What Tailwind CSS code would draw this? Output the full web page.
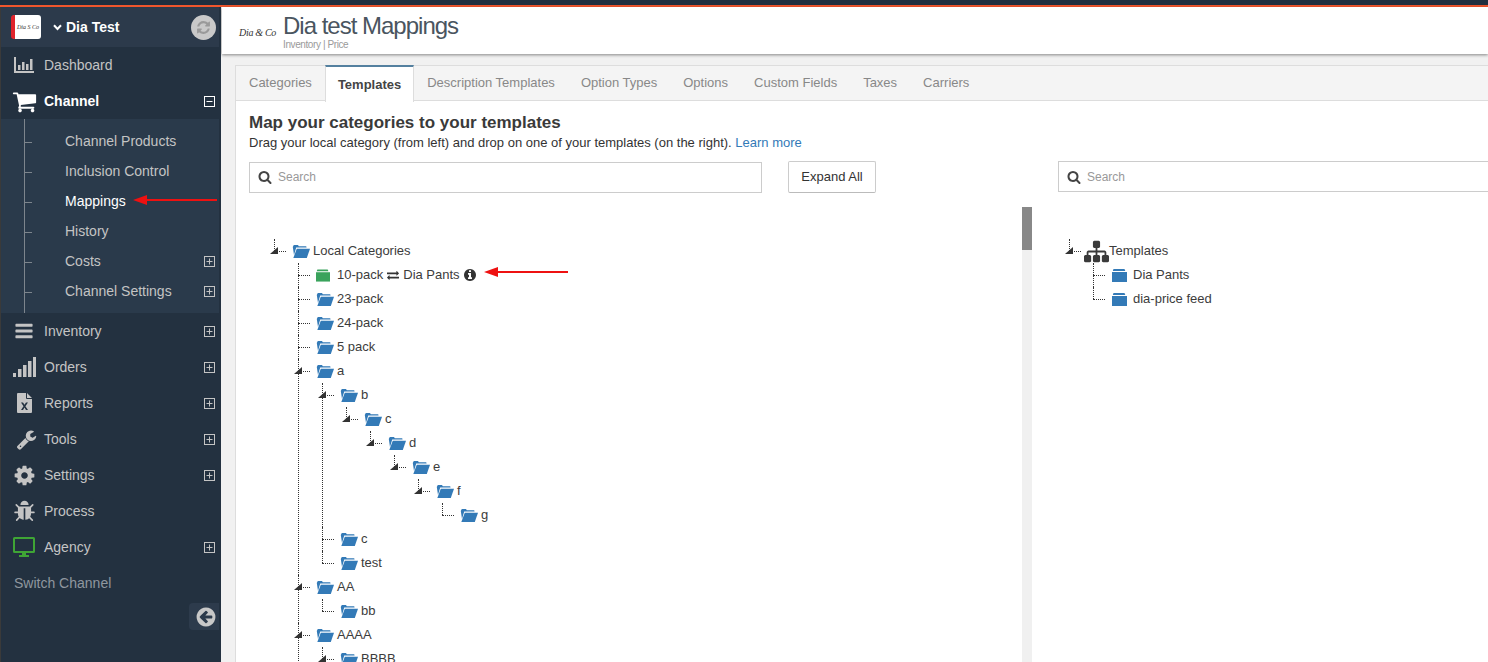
<!doctype html>
<html lang="en">
<head>
<meta charset="utf-8">
<title>Dia test Mappings</title>
<script src="https://cdn.jsdelivr.net/npm/@tailwindcss/browser@4"></script>
</head>
<body class="bg-[#f1f1f1] font-['Liberation_Sans',Arial,sans-serif] text-[14px] text-[#333]">

<!-- icon set -->
<svg class="hidden">
  <symbol id="i-cart" viewBox="0 0 1792 1792"><path d="M704 1536q0 52-38 90t-90 38-90-38-38-90 38-90 90-38 90 38 38 90zm896 0q0 52-38 90t-90 38-90-38-38-90 38-90 90-38 90 38 38 90zm128-1088v512q0 24-16.5 42.5t-40.5 21.5l-1044 122q13 60 13 70 0 16-24 64h920q26 0 45 19t19 45-19 45-45 19h-1024q-26 0-45-19t-19-45q0-11 8-31.5t16-36 21.5-40 15.5-29.5l-177-823h-204q-26 0-45-19t-19-45 19-45 45-19h256q16 0 28.5 6.5t19.5 15.5 13 24.5 8 26 5.5 29.5 4.5 26h1201q26 0 45 19t19 45z"/></symbol>
  <symbol id="i-bars" viewBox="0 0 1792 1792"><path d="M1664 1344v128q0 26-19 45t-45 19h-1408q-26 0-45-19t-19-45v-128q0-26 19-45t45-19h1408q26 0 45 19t19 45zm0-512v128q0 26-19 45t-45 19h-1408q-26 0-45-19t-19-45v-128q0-26 19-45t45-19h1408q26 0 45 19t19 45zm0-512v128q0 26-19 45t-45 19h-1408q-26 0-45-19t-19-45v-128q0-26 19-45t45-19h1408q26 0 45 19t19 45z"/></symbol>
  <symbol id="i-wrench" viewBox="0 0 1792 1792"><path d="M448 1472q0-26-19-45t-45-19-45 19-19 45 19 45 45 19 45-19 19-45zm644-420l-682 682q-37 37-90 37-52 0-91-37l-106-108q-38-36-38-90 0-53 38-91l681-681q39 98 114.5 173.5t173.5 114.5zm634-435q0 39-23 106-47 134-164.5 217.5t-258.5 83.5q-185 0-316.5-131.5t-131.5-316.5 131.5-316.5 316.5-131.5q58 0 121.5 16.5t107.5 46.5q16 11 16 28t-16 28l-293 169v224l193 107q5-3 79-48.5t135.5-81 70.5-35.5q15 0 23.5 10t8.5 25z"/></symbol>
  <symbol id="i-cog" viewBox="0 0 1792 1792"><path d="M1152 896q0-106-75-181t-181-75-181 75-75 181 75 181 181 75 181-75 75-181zm512-109v222q0 12-8 23t-20 13l-185 28q-19 54-39 91 35 50 107 138 10 12 10 25t-9 23q-27 37-99 108t-94 71q-12 0-26-9l-138-108q-44 23-91 38-16 136-29 186-7 28-36 28h-222q-14 0-24.5-8.5t-11.5-21.5l-28-184q-49-16-90-37l-141 107q-10 9-25 9-14 0-25-11-126-114-165-168-7-10-7-23 0-12 8-23 15-21 51-66.5t54-70.5q-27-50-41-99l-183-27q-13-2-21-12.5t-8-23.5v-222q0-12 8-23t19-13l186-28q14-46 39-92-40-57-107-138-10-12-10-24 0-10 9-23 26-36 98.5-107.5t94.5-71.5q13 0 26 10l138 107q44-23 91-38 16-136 29-186 7-28 36-28h222q14 0 24.5 8.5t11.5 21.5l28 184q49 16 90 37l142-107q9-9 24-9 13 0 25 10 129 119 165 170 7 8 7 22 0 12-8 23-15 21-51 66.5t-54 70.5q26 50 41 98l183 28q13 2 21 12.5t8 23.5z"/></symbol>
  <symbol id="i-bug" viewBox="0 0 1792 1792"><path d="M1696 960q0 26-19 45t-45 19h-224q0 171-67 290l208 209q19 19 19 45t-19 45q-18 19-45 19t-45-19l-198-197q-5 5-15 13t-42 28.5-65 36.5-82 29-97 13v-896h-128v896q-51 0-101.5-13.5t-87-33-66-39-43.5-32.5l-15-14-183 207q-20 21-48 21-24 0-43-16-19-18-20.5-44.5t15.5-46.5l202-227q-58-114-58-274h-224q-26 0-45-19t-19-45 19-45 45-19h224v-294l-173-173q-19-19-19-45t19-45 45-19 45 19l173 173h844l173-173q19-19 45-19t45 19 19 45-19 45l-173 173v294h224q26 0 45 19t19 45zm-480-576h-640q0-133 93.5-226.5t226.5-93.5 226.5 93.5 93.5 226.5z"/></symbol>
  <symbol id="i-search" viewBox="0 0 1792 1792"><path d="M1216 832q0-185-131.5-316.5t-316.5-131.5-316.5 131.5-131.5 316.5 131.5 316.5 316.5 131.5 316.5-131.5 131.5-316.5zm512 832q0 52-38 90t-90 38q-54 0-90-38l-343-342q-179 124-399 124-143 0-273.5-55.5t-225-150-150-225-55.5-273.5 55.5-273.5 150-225 225-150 273.5-55.5 273.5 55.5 225 150 150 225 55.5 273.5q0 220-124 399l343 343q37 37 37 90z"/></symbol>
  <symbol id="i-info" viewBox="0 0 1792 1792"><path d="M1152 1376v-160q0-14-9-23t-23-9h-96v-512q0-14-9-23t-23-9h-320q-14 0-23 9t-9 23v160q0 14 9 23t23 9h96v320h-96q-14 0-23 9t-9 23v160q0 14 9 23t23 9h448q14 0 23-9t9-23zm-128-896v-160q0-14-9-23t-23-9h-192q-14 0-23 9t-9 23v160q0 14 9 23t23 9h192q14 0 23-9t9-23zm640 416q0 209-103 385.5t-279.5 279.5-385.5 103-385.5-103-279.5-279.5-103-385.5 103-385.5 279.5-279.5 385.5-103 385.5 103 279.5 279.5 103 385.5z"/></symbol>
  <symbol id="i-back" viewBox="0 0 1792 1792"><path d="M1408 960v-128q0-26-19-45t-45-19h-502l189-189q19-19 19-45t-19-45l-91-91q-18-18-45-18t-45 18l-362 362-91 91q-18 18-18 45t18 45l91 91 362 362q18 18 45 18t45-18l91-91q18-18 18-45t-18-45l-189-189h502q26 0 45-19t19-45zm256-64q0 209-103 385.5t-279.5 279.5-385.5 103-385.5-103-279.5-279.5-103-385.5 103-385.5 279.5-279.5 385.5-103 385.5 103 279.5 279.5 103 385.5z"/></symbol>
  <symbol id="i-refresh" viewBox="0 0 1792 1792"><path d="M1639 1056q0 5-1 7-64 268-268 434.5t-478 166.5q-146 0-282.5-55t-243.5-157l-129 129q-19 19-45 19t-45-19-19-45v-448q0-26 19-45t45-19h448q26 0 45 19t19 45-19 45l-137 137q71 66 161 102t187 36q134 0 250-65t186-179q11-17 53-117 8-23 30-23h192q13 0 22.5 9.5t9.5 22.5zm25-800v448q0 26-19 45t-45 19h-448q-26 0-45-19t-19-45 19-45l138-138q-148-137-349-137-134 0-250 65t-186 179q-11 17-53 117-8 23-30 23h-199q-13 0-22.5-9.5t-9.5-22.5v-7q65-268 270-434.5t480-166.5q146 0 284 55.5t245 156.5l130-129q19-19 45-19t45 19 19 45z"/></symbol>
  <symbol id="i-exchange" viewBox="0 0 1792 1792"><path d="M1792 1184v192q0 13-9.5 22.5t-22.5 9.5h-1376v192q0 13-9.5 22.5t-22.5 9.5q-12 0-24-10l-319-320q-9-9-9-22 0-14 9-23l320-320q9-9 23-9 13 0 22.5 9.5t9.5 22.5v192h1376q13 0 22.5 9.5t9.5 22.5zm0-544q0 14-9 23l-320 320q-9 9-23 9-13 0-22.5-9.5t-9.5-22.5v-192h-1376q-13 0-22.5-9.5t-9.5-22.5v-192q0-13 9.5-22.5t22.5-9.5h1376v-192q0-14 9-23t23-9q12 0 24 10l319 319q9 9 9 23z"/></symbol>
  <symbol id="i-sitemap" viewBox="0 0 1792 1792"><path d="M1792 1248v320q0 40-28 68t-68 28h-320q-40 0-68-28t-28-68v-320q0-40 28-68t68-28h96v-192h-512v192h96q40 0 68 28t28 68v320q0 40-28 68t-68 28h-320q-40 0-68-28t-28-68v-320q0-40 28-68t68-28h96v-192h-512v192h96q40 0 68 28t28 68v320q0 40-28 68t-68 28h-320q-40 0-68-28t-28-68v-320q0-40 28-68t68-28h96v-192q0-52 38-90t90-38h512v-192h-96q-40 0-68-28t-28-68v-320q0-40 28-68t68-28h320q40 0 68 28t28 68v320q0 40-28 68t-68 28h-96v192h512q52 0 90 38t38 90v192h96q40 0 68 28t28 68z"/></symbol>
  <symbol id="i-chart" viewBox="0 0 20 16"><path d="M0 0h2v14h18v2H0z"/><path d="M4 8h2.5v5H4zM8 5h2.5v8H8zM12 7h2.5v6H12zM16 2h2.5v11H16z"/></symbol>
  <symbol id="i-signal" viewBox="0 0 23 20"><path d="M0 16h3v4H0zM5 12h3.500v8H5zM10 8h3.500v12H10zM15 4h3.500v16H15zM20 0h3v20h-3z"/></symbol>
  <symbol id="i-excel" viewBox="0 0 15 20"><path fill-rule="evenodd" d="M0 1a1 1 0 0 1 1-1h8v5a1 1 0 0 0 1 1h5v13a1 1 0 0 1-1 1H1a1 1 0 0 1-1-1zM10 0l5 5h-5zM4 9.500l2.500 3.700L4 17h2l1.500-2.400L9 17h2l-2.600-3.800L11 9.500H9l-1.500 2.300L6 9.500z"/></symbol>
  <symbol id="i-desktop" viewBox="0 0 22 20"><path fill-rule="evenodd" d="M1.500 0h19A1.500 1.500 0 0 1 22 1.500v13a1.500 1.500 0 0 1-1.500 1.500H13v2h3v2H6v-2h3v-2H1.500A1.500 1.500 0 0 1 0 14.500v-13A1.500 1.500 0 0 1 1.500 0zM2 2v12h18V2z"/></symbol>
  <symbol id="i-plus" viewBox="0 0 11 11"><path fill-rule="evenodd" d="M0 0h11v11H0zM1 1v9h9V1z"/><path d="M5 2.500h1V5h2.500v1H6v2.500H5V6H2.500V5H5z"/></symbol>
  <symbol id="i-minus" viewBox="0 0 11 11"><path fill-rule="evenodd" d="M0 0h11v11H0zM1 1v9h9V1z"/><path d="M2.500 5h6v1h-6z"/></symbol>
  <symbol id="i-open" viewBox="0 0 18 14"><path d="M1 2.500 1.800 1H6l.8 1.200h7.400l.4 1.300H4.200L2 11 .8 3z"/><path d="M4.800 4.800H18L14.800 14H1.300z"/></symbol>
  <symbol id="i-closed" viewBox="0 0 15 13"><path d="M1.500 0h11l.8 2H.8z"/><path d="M0 3h15v10H0z"/></symbol>
</svg>

<div class="relative h-[662px] overflow-hidden flex flex-col">
  <div class="h-[5px] bg-[#1f2f3f] shrink-0"></div>
  <div class="h-[2px] bg-[#f0562d] shrink-0"></div>

  <div class="flex flex-1 min-h-0">
    <!-- sidebar -->
    <aside class="relative w-[221px] shrink-0 bg-[#233140] border-l border-[#3a3a3a] text-[#c4c4c4]">
      <div class="h-[40px] mr-[2px] bg-[#2c3a4b] flex items-center pl-[10px]">
        <div class="w-[30px] h-[24px] rounded-[3px] bg-white border-l-[4px] border-[#e0242c] flex items-center justify-center font-['Liberation_Serif',serif] italic text-[6px] text-[#333] whitespace-nowrap">Dia S Co</div>
        <svg class="ml-[12px] w-[9px] h-[7px] text-white" viewBox="0 0 9 7" fill="none" stroke="currentColor" stroke-width="2"><path d="M1 1.200 4.500 5 8 1.200"/></svg>
        <span class="ml-[4px] font-bold text-white">Dia Test</span>
        <div class="ml-auto mr-[3px] w-[25px] h-[25px] rounded-full bg-[#c9c9c9] flex items-center justify-center">
          <svg class="w-[15px] h-[15px] fill-[#9a9a9a]"><use href="#i-refresh"/></svg>
        </div>
      </div>

      <a class="h-[36px] flex items-center pl-[13px] pr-[6px]">
        <span class="w-[30px] shrink-0"><svg class="w-[20px] h-[16px] fill-current"><use href="#i-chart"/></svg></span>Dashboard
      </a>
      <a class="h-[36px] flex items-center pl-[11px] pr-[6px] font-bold text-white">
        <span class="w-[32px] shrink-0"><svg class="w-[25px] h-[25px] fill-current"><use href="#i-cart"/></svg></span>Channel
        <svg class="ml-auto w-[11px] h-[11px] fill-current"><use href="#i-minus"/></svg>
      </a>

      <ul class="relative mr-[2px] bg-[#2a3a4b] py-[7px]">
        <span class="absolute left-[23px] top-0 bottom-0 border-l border-[#7d858d]"></span>
        <li class="relative h-[30px] flex items-center pl-[64px] pr-[4px]"><span class="absolute left-[23px] top-[16px] w-[8px] border-t border-[#7d858d]"></span>Channel Products</li>
        <li class="relative h-[30px] flex items-center pl-[64px] pr-[4px]"><span class="absolute left-[23px] top-[16px] w-[8px] border-t border-[#7d858d]"></span>Inclusion Control</li>
        <li class="relative h-[30px] flex items-center pl-[64px] pr-[4px] text-white"><span class="absolute left-[23px] top-[16px] w-[8px] border-t border-[#7d858d]"></span>Mappings</li>
        <li class="relative h-[30px] flex items-center pl-[64px] pr-[4px]"><span class="absolute left-[23px] top-[16px] w-[8px] border-t border-[#7d858d]"></span>History</li>
        <li class="relative h-[30px] flex items-center pl-[64px] pr-[4px]"><span class="absolute left-[23px] top-[16px] w-[8px] border-t border-[#7d858d]"></span>Costs<svg class="ml-auto w-[11px] h-[11px] fill-current"><use href="#i-plus"/></svg></li>
        <li class="relative h-[30px] flex items-center pl-[64px] pr-[4px]"><span class="absolute left-[23px] top-[16px] w-[8px] border-t border-[#7d858d]"></span>Channel Settings<svg class="ml-auto w-[11px] h-[11px] fill-current"><use href="#i-plus"/></svg></li>
      </ul>

      <a class="h-[36px] flex items-center pl-[13px] pr-[6px]">
        <span class="w-[30px] shrink-0"><svg class="w-[20px] h-[20px] fill-current"><use href="#i-bars"/></svg></span>Inventory
        <svg class="ml-auto w-[11px] h-[11px] fill-current"><use href="#i-plus"/></svg>
      </a>
      <a class="h-[36px] flex items-center pl-[12px] pr-[6px]">
        <span class="w-[31px] shrink-0"><svg class="w-[23px] h-[20px] fill-current"><use href="#i-signal"/></svg></span>Orders
        <svg class="ml-auto w-[11px] h-[11px] fill-current"><use href="#i-plus"/></svg>
      </a>
      <a class="h-[36px] flex items-center pl-[16px] pr-[6px]">
        <span class="w-[27px] shrink-0"><svg class="w-[15px] h-[20px] fill-current"><use href="#i-excel"/></svg></span>Reports
        <svg class="ml-auto w-[11px] h-[11px] fill-current"><use href="#i-plus"/></svg>
      </a>
      <a class="h-[36px] flex items-center pl-[15px] pr-[6px]">
        <span class="w-[28px] shrink-0"><svg class="w-[21px] h-[21px] fill-current"><use href="#i-wrench"/></svg></span>Tools
        <svg class="ml-auto w-[11px] h-[11px] fill-current"><use href="#i-plus"/></svg>
      </a>
      <a class="h-[36px] flex items-center pl-[12px] pr-[6px]">
        <span class="w-[31px] shrink-0"><svg class="w-[23px] h-[23px] fill-current"><use href="#i-cog"/></svg></span>Settings
        <svg class="ml-auto w-[11px] h-[11px] fill-current"><use href="#i-plus"/></svg>
      </a>
      <a class="h-[36px] flex items-center pl-[12px] pr-[6px]">
        <span class="w-[31px] shrink-0"><svg class="w-[23px] h-[23px] fill-current"><use href="#i-bug"/></svg></span>Process
      </a>
      <a class="h-[36px] flex items-center pl-[12px] pr-[6px]">
        <span class="w-[31px] shrink-0"><svg class="w-[22px] h-[20px] fill-[#3fa535]"><use href="#i-desktop"/></svg></span>Agency
        <svg class="ml-auto w-[11px] h-[11px] fill-current"><use href="#i-plus"/></svg>
      </a>
      <a class="h-[36px] flex items-center pl-[13px] text-[#8f979f]">Switch Channel</a>

      <button class="absolute right-[2px] top-[596px] w-[30px] h-[27px] rounded-l-[4px] bg-[#2d3b4c] flex items-center justify-center pl-[4px]">
        <svg class="w-[22px] h-[22px] fill-[#c8c8c8]"><use href="#i-back"/></svg>
      </button>
    </aside>

    <!-- main column -->
    <main class="flex-1 min-w-0">
      <header class="h-[47px] ml-[1px] bg-white shadow-[0_1px_3px_rgba(0,0,0,0.45)] flex items-center pl-[17px]">
        <span class="w-[44px] shrink-0 font-['Liberation_Serif',serif] italic text-[10px] tracking-[-0.3px] text-[#333] mt-[3px]">Dia &amp; Co</span>
        <div class="mt-[1px]">
          <h1 class="text-[24px] leading-[26px] text-[#4a5560] tracking-[-1px]">Dia test Mappings</h1>
          <p class="text-[10px] leading-[11px] text-[#9a9a9a] tracking-[-0.4px]">Inventory | Price</p>
        </div>
      </header>

      <section class="w-[1400px] ml-[14px] mt-[11px] h-[600px] bg-white border border-[#ddd]">
        <nav class="h-[35px] bg-[#f4f4f4] border-b border-[#ddd] flex text-[13px] text-[#888]">
          <a class="px-[13px] flex items-center">Categories</a>
          <a class="-mt-px h-[37px] px-[12px] flex items-center bg-white border-t-2 border-x border-t-[#54809f] border-x-[#ddd] font-bold text-[#444]">Templates</a>
          <a class="px-[13px] flex items-center">Description Templates</a>
          <a class="px-[13px] flex items-center">Option Types</a>
          <a class="px-[13px] flex items-center">Options</a>
          <a class="px-[13px] flex items-center">Custom Fields</a>
          <a class="px-[13px] flex items-center">Taxes</a>
          <a class="px-[13px] flex items-center">Carriers</a>
        </nav>

        <div class="pl-[13px] pt-[12px]">
          <h2 class="font-bold text-[17px] leading-[20px] text-[#3a3a3a]">Map your categories to your templates</h2>
          <p class="mt-[1px] leading-[18px] text-[13px]">Drag your local category (from left) and drop on one of your templates (on the right). <a class="text-[#337ab7]">Learn more</a></p>

          <div class="mt-[9px] flex gap-[26px]">
            <div class="w-[783px] shrink-0">
              <div class="flex items-center gap-[26px]">
                <label class="w-[513px] h-[31px] border border-[#ccc] flex items-center pl-[8px] text-[12px] text-[#999]">
                  <svg class="w-[14px] h-[14px] fill-[#444] mr-[6px]"><use href="#i-search"/></svg>Search
                </label>
                <button class="w-[88px] h-[32px] bg-white border border-[#ccc] border-b-[#bbb] rounded-[2px] text-[13px] text-[#333]">Expand All</button>
              </div>
              <div class="mt-[14px] h-[460px] flex">
                <div class="flex-1 pt-[32px] pl-[25px]" id="left-tree"></div>
                <div class="w-[10px] bg-[#f0f0f0]"><div class="h-[43px] bg-[#888]"></div></div>
              </div>
            </div>

            <div class="flex-1">
              <label class="h-[31px] border border-[#ccc] flex items-center pl-[8px] text-[12px] text-[#999]">
                <svg class="w-[14px] h-[14px] fill-[#444] mr-[6px]"><use href="#i-search"/></svg>Search
              </label>
              <div class="mt-[15px] pt-[32px] pl-[11px]" id="right-tree"></div>
            </div>
          </div>
        </div>
      </section>
    </main>
  </div>

  <!-- annotation arrows -->
  <svg class="absolute left-[133px] top-[195px] w-[85px] h-[10px] fill-[#ee1111]" viewBox="0 0 85 10"><path d="M0 5 14 0v4h70v2H14v4z"/></svg>
  <svg class="absolute left-[484px] top-[267px] w-[84px] h-[10px] fill-[#ee1111]" viewBox="0 0 84 10"><path d="M0 5 14 0v4h70v2H14v4z"/></svg>
</div>

<script>
  const folder = (id, cls) => `<svg class="${cls}"><use href="#${id}"/></svg>`;
  const OPEN = folder("i-open", "w-[18px] h-[14px] fill-[#337ab7] shrink-0 mr-[3px]");
  const CLOSED = folder("i-closed", "w-[15px] h-[13px] fill-[#337ab7] shrink-0 ml-[1px] mr-[6px]");
  const GREEN = folder("i-closed", "w-[14px] h-[13px] fill-[#3aa35c] shrink-0 mr-[7px]");
  const SITEMAP = folder("i-sitemap", "w-[25px] h-[25px] fill-[#3a3a3a] shrink-0 -ml-[3px]");
  const TOGGLE = `<svg class="absolute -left-[4px] top-[8px] w-[8px] h-[7px] fill-[#333]" viewBox="0 0 8 7"><path d="M8 0v7H0z"/></svg>`;

  // t: label, html: rich label, more: branch runs on past the visible list
  function node(n, last) {
    const kids = n.kids || [];
    const icon = n.icon || OPEN;
    const line = last
      ? `<span class="absolute left-0 top-0 h-[12px] border-l border-dotted border-[#333]"></span>`
      : `<span class="absolute left-0 top-0 bottom-0 border-l border-dotted border-[#333]"></span>`;
    return `<li class="relative">${line}
      <span class="absolute left-0 top-[12px] w-[12px] border-t border-dotted border-[#333]"></span>
      ${kids.length ? TOGGLE : ""}
      <div class="h-[24px] pl-[18px] flex items-center text-[13px] text-[#3c3c3c] whitespace-nowrap">${icon}${n.html || n.t}</div>
      ${kids.length ? list(kids, n.more) : ""}
    </li>`;
  }
  const list = (kids, more) => `<ul class="ml-[24px]">${kids.map((k, i) => node(k, !more && i === kids.length - 1)).join("")}</ul>`;

  const leftTree = [{ t: "Local Categories", more: true, kids: [
    { icon: GREEN, html: `10-pack<svg class="w-[12px] h-[12px] fill-[#333] ml-[4px] mr-[4px]"><use href="#i-exchange"/></svg>Dia Pants<svg class="w-[14px] h-[14px] fill-[#333] ml-[3px]"><use href="#i-info"/></svg>` },
    { t: "23-pack" }, { t: "24-pack" }, { t: "5 pack" },
    { t: "a", kids: [
      { t: "b", kids: [{ t: "c", kids: [{ t: "d", kids: [{ t: "e", kids: [{ t: "f", kids: [{ t: "g" }] }] }] }] }] },
      { t: "c" }, { t: "test" }
    ] },
    { t: "AA", kids: [{ t: "bb" }] },
    { t: "AAAA", kids: [{ t: "BBBB", kids: [{ t: "" }] }] }
  ] }];
  const rightTree = [{ t: "Templates", icon: SITEMAP, kids: [
    { t: "Dia Pants", icon: CLOSED }, { t: "dia-price feed", icon: CLOSED }
  ] }];

  document.getElementById("left-tree").innerHTML = `<ul>${node(leftTree[0], true)}</ul>`;
  document.getElementById("right-tree").innerHTML = `<ul>${node(rightTree[0], true)}</ul>`;
</script>
</body>
</html>
